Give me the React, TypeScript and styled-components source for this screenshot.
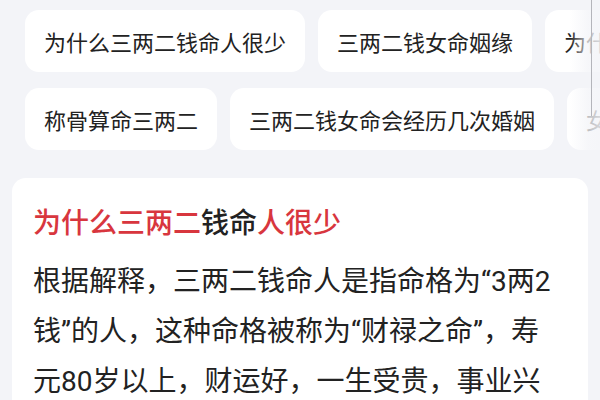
import styled, { createGlobalStyle } from 'styled-components';

const GlobalStyle = createGlobalStyle`
  html, body {
    margin: 0;
    padding: 0;
    background-color: #f3f4f8;
    overflow: hidden;
  }
  body {
    font-family: Roboto, "Noto Sans CJK SC", sans-serif;
    color: #222222;
  }
`;

const Page = styled.div`
  width: 600px;
  height: 400px;
  padding-top: 10px;
  box-sizing: border-box;
  overflow: hidden;
`;

const TagArea = styled.div`
  position: relative;
  display: flex;
  flex-direction: column;
  gap: 16px;
  padding-left: 25px;
`;

const TagRow = styled.div`
  display: flex;
  gap: 13px;
  white-space: nowrap;
  overflow: hidden;
`;

const Tag = styled.div`
  flex: none;
  height: 62px;
  padding: 0 19px;
  display: flex;
  align-items: center;
  border-radius: 14px;
  background-color: #ffffff;
  font-size: 22px;
  color: #222222;
`;

const Fade = styled.div`
  position: absolute;
  top: -10px;
  right: 0;
  width: 30px;
  height: 172px;
  background: linear-gradient(
    to right,
    rgba(243, 244, 248, 0) 0%,
    rgba(243, 244, 248, 0.75) 60%,
    rgba(243, 244, 248, 0.85) 100%
  );
  pointer-events: none;
`;

const ScrollLine = styled.div`
  position: absolute;
  top: 0;
  left: 21px;
  width: 1px;
  height: 116px;
  background-color: #b4b5bb;
`;

const Card = styled.div`
  margin: 28px 12px 0;
  padding: 26px 32px 0 21px;
  border-radius: 14px;
  background-color: #ffffff;
`;

const Title = styled.div`
  font-size: 28px;
  line-height: 40px;
  font-weight: 500;
  color: #d8363e;
`;

const Plain = styled.span`
  color: #222222;
`;

const Body = styled.p`
  margin: 13px 0 0;
  font-size: 28px;
  line-height: 50px;
  color: #222222;
`;

const rows = [
  ['为什么三两二钱命人很少', '三两二钱女命姻缘', '为什么三两二钱是富贵命'],
  ['称骨算命三两二', '三两二钱女命会经历几次婚姻', '女命三两二钱是什么命'],
];

const App = () => {
  return (
    <>
      <GlobalStyle />
      <Page>
        <TagArea>
          {rows.map((row, i) => (
            <TagRow key={i}>
              {row.map((text) => (
                <Tag key={text}>{text}</Tag>
              ))}
            </TagRow>
          ))}
          <Fade>
            <ScrollLine />
          </Fade>
        </TagArea>
        <Card>
          <Title>
            为什么三两二<Plain>钱命</Plain>人很少
          </Title>
          <Body>
            根据解释，三两二钱命人是指命格为“3两2钱”的人，这种命格被称为“财禄之命”，寿元80岁以上，财运好，一生受贵，事业兴旺，家庭幸福美满。
          </Body>
        </Card>
      </Page>
    </>
  );
};

export default App;
